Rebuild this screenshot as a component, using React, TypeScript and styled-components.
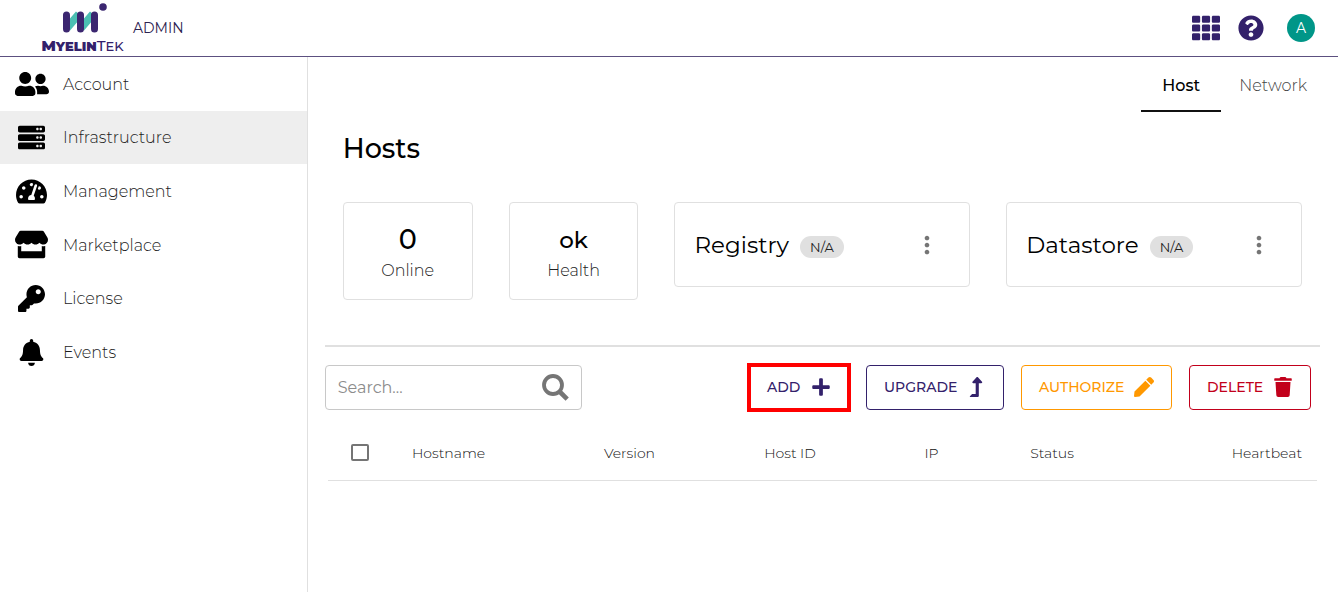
import React from "react";
import styled, { createGlobalStyle } from "styled-components";
import {
  FaBell,
  FaKey,
  FaLevelUpAlt,
  FaPen,
  FaPlus,
  FaQuestionCircle,
  FaServer,
  FaStore,
  FaTachometerAlt,
  FaTh,
  FaTrash,
  FaUserFriends,
} from "react-icons/fa";
import { MdMoreVert } from "react-icons/md";

const purple = "#33216b";
const orange = "#ff9800";
const red = "#c2001b";

const GlobalStyle = createGlobalStyle`
  *, *::before, *::after { box-sizing: border-box; }
  body {
    margin: 0;
    background: #fff;
    color: #000;
    font-family: Montserrat, Inter, "Open Sans", sans-serif;
    font-size: 16px;
  }
  button, input { font-family: inherit; }
`;

const Page = styled.div`
  display: flex;
  flex-direction: column;
  min-height: 100vh;
`;

const Header = styled.header`
  display: flex;
  align-items: center;
  height: 57px;
  padding: 0 23px 0 40px;
  border-bottom: 1px solid #5c5080;
`;

const Brand = styled.a`
  display: flex;
  flex-direction: column;
  align-items: center;
  width: 85px;
  color: ${purple};
  text-decoration: none;
`;

const BrandMark = styled.svg`
  display: block;
  width: 48px;
  height: 36px;
`;

const BrandName = styled.span`
  font-size: 13px;
  line-height: 17px;
  font-weight: 800;
  text-transform: uppercase;
  white-space: nowrap;
`;

const BrandPart = styled.span<{ $light?: boolean }>`
  display: inline-block;
  font-weight: ${(p) => (p.$light ? 500 : 900)};
  &::first-letter { font-size: 15px; }
`;

const Area = styled.span`
  margin-left: 8px;
  color: #2c2250;
  font-size: 14px;
`;

const HeaderActions = styled.div`
  display: flex;
  align-items: center;
  margin-left: auto;
`;

const HeaderButton = styled.button`
  display: flex;
  padding: 0;
  margin-right: 18px;
  border: 0;
  background: none;
  color: ${purple};
  cursor: pointer;
`;

const Avatar = styled.button`
  width: 28px;
  height: 28px;
  margin-left: 5px;
  padding: 0;
  border: 0;
  border-radius: 50%;
  background: #009688;
  color: #fff;
  font-size: 14px;
  cursor: pointer;
`;

const Body = styled.div`
  display: flex;
  flex: 1;
`;

const Sidebar = styled.nav`
  flex: none;
  width: 23%;
  border-right: 1px solid #e0e0e0;
`;

const MenuList = styled.ul`
  display: grid;
  grid-template-rows: repeat(6, 1fr);
  height: 322px;
  margin: 0;
  padding: 0;
  list-style: none;
`;

const MenuLink = styled.a<{ $active?: boolean }>`
  display: flex;
  align-items: center;
  height: 100%;
  background: ${(p) => (p.$active ? "#eeeeee" : "transparent")};
  color: #1c1c1c;
  font-weight: 300;
  text-decoration: none;
`;

const MenuIcon = styled.span`
  display: flex;
  justify-content: center;
  width: 63px;
  color: #000;
`;

const MenuLabel = styled.span`
  padding-top: 1px;
`;

const Main = styled.main`
  flex: 1;
  min-width: 0;
`;

const Tabs = styled.div`
  display: flex;
  justify-content: flex-end;
  height: 55px;
  padding-right: 13px;
`;

const Tab = styled.button<{ $active?: boolean }>`
  min-width: 80px;
  padding: 4px 18px 0;
  border: 0;
  border-bottom: 2px solid ${(p) => (p.$active ? "#111" : "transparent")};
  background: none;
  color: ${(p) => (p.$active ? "#000" : "#444")};
  font-size: 16px;
  font-weight: ${(p) => (p.$active ? 500 : 300)};
  cursor: pointer;
`;

const Title = styled.h1`
  margin: 20px 36px 0 35px;
  font-size: 27px;
  line-height: 34px;
  font-weight: 500;
`;

const Cards = styled.section`
  display: grid;
  grid-template-columns: repeat(6, 1fr);
  gap: 36px;
  align-items: start;
  margin: 36px 36px 0 35px;
`;

const Card = styled.div`
  border: 1px solid #e0e0e0;
  border-radius: 4px;
`;

const StatCard = styled(Card)`
  display: flex;
  flex-direction: column;
  align-items: center;
  height: 98px;
  padding-top: 20px;
`;

const StatValue = styled.span<{ $large?: boolean }>`
  font-size: ${(p) => (p.$large ? 27 : 23)}px;
  line-height: 34px;
  font-weight: 500;
`;

const StatLabel = styled.span`
  color: #222;
  line-height: 28px;
  font-weight: 300;
`;

const ServiceCard = styled(Card)`
  display: flex;
  align-items: center;
  grid-column: span 2;
  height: 85px;
  padding: 0 28px 0 19px;
`;

const ServiceName = styled.h2`
  margin: 0;
  font-size: 23px;
  line-height: 30px;
  font-weight: 400;
`;

const Badge = styled.span`
  margin: 4px 0 0 11px;
  padding: 0 10px;
  border-radius: 11px;
  background: #e0e0e0;
  color: #222;
  font-size: 13px;
  line-height: 22px;
`;

const MoreButton = styled.button`
  display: flex;
  margin-left: auto;
  padding: 0;
  border: 0;
  background: none;
  color: #757575;
  cursor: pointer;
`;

const Divider = styled.hr`
  height: 2px;
  margin: 45px 18px 0 17px;
  border: 0;
  background: #e0e0e0;
`;

const Toolbar = styled.div`
  display: flex;
  align-items: center;
  gap: 17px;
  margin: 18px 27px 0 17px;
`;

const SearchBox = styled.label`
  display: flex;
  align-items: center;
  width: 257px;
  height: 45px;
  margin-right: auto;
  padding: 0 12px;
  border: 1px solid #c8c8c8;
  border-radius: 4px;
  color: #757575;
`;

const SearchInput = styled.input`
  flex: 1;
  min-width: 0;
  padding: 0;
  border: 0;
  outline: 0;
  font-size: 16px;
  &::placeholder {
    color: #8c8c8c;
    opacity: 1;
  }
`;

const ActionButton = styled.button<{ $color: string; $width: number; $marked?: boolean }>`
  display: flex;
  align-items: center;
  justify-content: space-between;
  width: ${(p) => p.$width}px;
  height: 45px;
  padding: 0 17px 2px;
  border: 1px solid ${(p) => p.$color};
  border-radius: 4px;
  outline: ${(p) => (p.$marked ? "4px solid #f00" : "none")};
  outline-offset: -2px;
  ${(p) => p.$marked && "border-color: transparent; border-radius: 0;"}
  background: #fff;
  color: ${(p) => p.$color};
  font-size: 14px;
  font-weight: 500;
  cursor: pointer;
`;

const HostTable = styled.table`
  width: calc(100% - 41px);
  margin: 16px 21px 0 20px;
  border-collapse: collapse;
  table-layout: fixed;
`;

const HeadCell = styled.th<{ $width?: string; $align?: string }>`
  width: ${(p) => p.$width ?? "auto"};
  height: 54px;
  padding: 0 15px;
  border-bottom: 1px solid #e0e0e0;
  color: #111;
  font-size: 14px;
  font-weight: 300;
  text-align: ${(p) => p.$align ?? "left"};
`;

const Check = styled.input`
  appearance: none;
  display: block;
  width: 18px;
  height: 17px;
  margin: 0 0 0 8px;
  border: 2px solid #757575;
  border-radius: 2px;
`;

const menu = [
  { label: "Account", icon: <FaUserFriends size={34} /> },
  { label: "Infrastructure", icon: <FaServer size={27} />, active: true },
  { label: "Management", icon: <FaTachometerAlt size={31} /> },
  { label: "Marketplace", icon: <FaStore size={33} /> },
  { label: "License", icon: <FaKey size={27} /> },
  { label: "Events", icon: <FaBell size={27} /> },
];

const actions = [
  { label: "ADD", color: purple, width: 100, icon: <FaPlus size={20} />, marked: true },
  { label: "UPGRADE", color: purple, width: 138, icon: <FaLevelUpAlt size={20} /> },
  { label: "AUTHORIZE", color: orange, width: 151, icon: <FaPen size={20} /> },
  { label: "DELETE", color: red, width: 122, icon: <FaTrash size={20} /> },
];

const columns = [
  { label: "Hostname", width: "19.4%" },
  { label: "Version", width: "16.2%" },
  { label: "Host ID", width: "16.2%" },
  { label: "IP", width: "10.7%" },
  { label: "Status" },
  { label: "Heartbeat", align: "right" },
];

export default function App() {
  return (
    <Page>
      <GlobalStyle />
      <Header>
        <Brand href="#">
          <BrandMark viewBox="0 0 48 36" aria-hidden="true">
            <path d="M8 27 20 13M22 27 34 13" stroke="#4bbfb2" strokeWidth="8" />
            <path d="M7.500 14v14M21.500 14v14M35.500 14v14" stroke="#3b2670" strokeWidth="7" strokeLinecap="round" />
            <circle cx="44" cy="6" r="3.800" fill="#3b2670" />
          </BrandMark>
          <BrandName>
            <BrandPart>Myelin</BrandPart>
            <BrandPart $light>Tek</BrandPart>
          </BrandName>
        </Brand>
        <Area>ADMIN</Area>
        <HeaderActions>
          <HeaderButton aria-label="Apps">
            <FaTh size={28} />
          </HeaderButton>
          <HeaderButton aria-label="Help">
            <FaQuestionCircle size={26} />
          </HeaderButton>
          <Avatar aria-label="Profile">A</Avatar>
        </HeaderActions>
      </Header>
      <Body>
        <Sidebar>
          <MenuList>
            {menu.map((item) => (
              <li key={item.label}>
                <MenuLink href="#" $active={item.active}>
                  <MenuIcon>{item.icon}</MenuIcon>
                  <MenuLabel>{item.label}</MenuLabel>
                </MenuLink>
              </li>
            ))}
          </MenuList>
        </Sidebar>
        <Main>
          <Tabs role="tablist">
            <Tab role="tab" aria-selected="true" $active>
              Host
            </Tab>
            <Tab role="tab" aria-selected="false">
              Network
            </Tab>
          </Tabs>
          <Title>Hosts</Title>
          <Cards>
            <StatCard>
              <StatValue $large>0</StatValue>
              <StatLabel>Online</StatLabel>
            </StatCard>
            <StatCard>
              <StatValue>ok</StatValue>
              <StatLabel>Health</StatLabel>
            </StatCard>
            {["Registry", "Datastore"].map((name) => (
              <ServiceCard key={name}>
                <ServiceName>{name}</ServiceName>
                <Badge>N/A</Badge>
                <MoreButton aria-label={`${name} options`}>
                  <MdMoreVert size={28} />
                </MoreButton>
              </ServiceCard>
            ))}
          </Cards>
          <Divider />
          <Toolbar>
            <SearchBox>
              <SearchInput type="text" placeholder="Search..." aria-label="Search hosts" />
              <svg width="27" height="27" viewBox="0 0 27 27" fill="none" stroke="currentColor" aria-hidden="true">
                <circle cx="11" cy="11" r="9" strokeWidth="3.800" />
                <path d="M17 17 25.200 25.200" strokeWidth="4.600" />
              </svg>
            </SearchBox>
            {actions.map((a) => (
              <ActionButton key={a.label} $color={a.color} $width={a.width} $marked={a.marked}>
                {a.label}
                {a.icon}
              </ActionButton>
            ))}
          </Toolbar>
          <HostTable>
            <thead>
              <tr>
                <HeadCell $width="7%">
                  <Check type="checkbox" aria-label="Select all hosts" />
                </HeadCell>
                {columns.map((c) => (
                  <HeadCell key={c.label} $width={c.width} $align={c.align}>
                    {c.label}
                  </HeadCell>
                ))}
              </tr>
            </thead>
          </HostTable>
        </Main>
      </Body>
    </Page>
  );
}
